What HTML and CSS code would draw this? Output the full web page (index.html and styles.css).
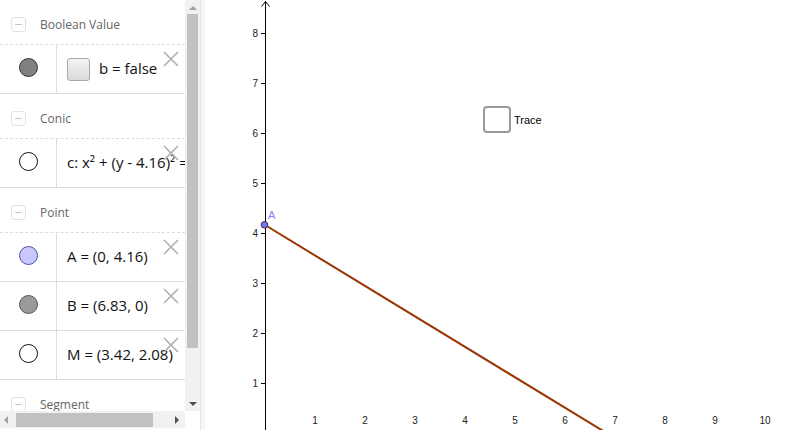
FILE: index.html
```html
<!DOCTYPE html>
<html>
<head>
<meta charset="utf-8">
<link rel="stylesheet" href="styles.css">
</head>
<body>
<div class="app">
  <div class="algebra">
    <div class="av-list">
      <div class="group-header"><span class="toggle"></span><span class="group-title">Boolean Value</span></div>
      <div class="item">
        <div class="marker"><span class="dot dot-bool"></span></div>
        <div class="content"><span class="cbox"></span><span class="expr">b = false</span></div>
        <svg class="del" width="18" height="18" viewBox="0 0 18 18"><path d="M2 2L16 16M16 2L2 16"/></svg>
      </div>
      <div class="group-header"><span class="toggle"></span><span class="group-title">Conic</span></div>
      <div class="item">
        <div class="marker"><span class="dot dot-white"></span></div>
        <div class="content"><span class="expr">c: x² + (y - 4.16)² =</span></div>
        <svg class="del" width="18" height="18" viewBox="0 0 18 18"><path d="M2 2L16 16M16 2L2 16"/></svg>
      </div>
      <div class="group-header"><span class="toggle"></span><span class="group-title">Point</span></div>
      <div class="item">
        <div class="marker"><span class="dot dot-a"></span></div>
        <div class="content"><span class="expr">A = (0, 4.16)</span></div>
        <svg class="del" width="18" height="18" viewBox="0 0 18 18"><path d="M2 2L16 16M16 2L2 16"/></svg>
      </div>
      <div class="item">
        <div class="marker"><span class="dot dot-b"></span></div>
        <div class="content"><span class="expr">B = (6.83, 0)</span></div>
        <svg class="del" width="18" height="18" viewBox="0 0 18 18"><path d="M2 2L16 16M16 2L2 16"/></svg>
      </div>
      <div class="item">
        <div class="marker"><span class="dot dot-white"></span></div>
        <div class="content"><span class="expr">M = (3.42, 2.08)</span></div>
        <svg class="del" width="18" height="18" viewBox="0 0 18 18"><path d="M2 2L16 16M16 2L2 16"/></svg>
      </div>
      <div class="group-header"><span class="toggle"></span><span class="group-title">Segment</span></div>
    </div>
    <div class="vscroll">
      <span class="arrow-up"></span>
      <div class="vtrack"><div class="vthumb"></div></div>
      <span class="arrow-down"></span>
    </div>
    <div class="hscroll">
      <span class="arrow-left"></span>
      <div class="htrack"><div class="hthumb"></div></div>
      <span class="arrow-right"></span>
    </div>
    <div class="corner"></div>
  </div>
  <div class="divider"></div>
  <div class="graphics">
    <svg class="canvas" width="595" height="430" viewBox="205 0 595 430">
      <g class="axis">
        <line x1="265.5" y1="1" x2="265.5" y2="430"/>
        <polyline points="261.5,6.5 265.5,1.5 269.5,6.5" fill="none"/>
        <line x1="261" y1="33.5" x2="265" y2="33.5"/>
        <line x1="261" y1="83.5" x2="265" y2="83.5"/>
        <line x1="261" y1="133.5" x2="265" y2="133.5"/>
        <line x1="261" y1="183.5" x2="265" y2="183.5"/>
        <line x1="261" y1="233.5" x2="265" y2="233.5"/>
        <line x1="261" y1="283.5" x2="265" y2="283.5"/>
        <line x1="261" y1="333.5" x2="265" y2="333.5"/>
        <line x1="261" y1="383.5" x2="265" y2="383.5"/>
      </g>
      <g class="ylabels">
        <text x="258" y="37">8</text>
        <text x="258" y="87">7</text>
        <text x="258" y="137">6</text>
        <text x="258" y="187">5</text>
        <text x="258" y="237">4</text>
        <text x="258" y="287">3</text>
        <text x="258" y="337">2</text>
        <text x="258" y="387">1</text>
      </g>
      <g class="xlabels">
        <text x="315" y="424">1</text>
        <text x="365" y="424">2</text>
        <text x="415" y="424">3</text>
        <text x="465" y="424">4</text>
        <text x="515" y="424">5</text>
        <text x="565" y="424">6</text>
        <text x="615" y="424">7</text>
        <text x="665" y="424">8</text>
        <text x="715" y="424">9</text>
        <text x="765" y="424">10</text>
      </g>
      <line class="segment" x1="265" y1="225" x2="606.5" y2="433"/>
      <circle class="point-a" cx="264.5" cy="224.8" r="3.3"/>
      <text class="label-a" x="268" y="219">A</text>
      <rect class="trace-box" x="484" y="107" width="26" height="25" rx="3" ry="3"/>
      <text class="trace-label" x="514" y="124">Trace</text>
    </svg>
  </div>
</div>
</body>
</html>
```

FILE: styles.css
```css
html, body {
  margin: 0;
  padding: 0;
  background: #ffffff;
}

.app {
  width: 800px;
  height: 430px;
  display: flex;
  overflow: hidden;
  font-family: "Open Sans", "DejaVu Sans", sans-serif;
}

.algebra {
  width: 200px;
  height: 430px;
  display: grid;
  grid-template-columns: 185px 15px;
  grid-template-rows: 411px 19px;
  flex: none;
}

.av-list {
  overflow: hidden;
  background: #ffffff;
}

.group-header {
  border-bottom: 1px dashed #dcdcdc;
  display: flex;
  align-items: center;
  box-sizing: content-box;
  padding-top: 4px;
  height: 40px;
}

.toggle {
  width: 13px;
  height: 13px;
  margin-left: 11px;
  border: 1px solid #e2e2e2;
  border-radius: 3px;
  position: relative;
  flex: none;
}

.toggle::after {
  content: "";
  position: absolute;
  left: 3px;
  top: 6px;
  width: 7px;
  height: 1px;
  background: #c4c4c4;
}

.group-title {
  margin-left: 14px;
  font-size: 12px;
  color: #666666;
}

.item {
  height: 48px;
  border-bottom: 1px solid #dddddd;
  display: flex;
  position: relative;
}

.marker {
  width: 57px;
  border-right: 1px solid #dddddd;
  display: flex;
  align-items: center;
  justify-content: center;
  flex: none;
  padding-bottom: 3px;
  box-sizing: border-box;
}

.dot {
  width: 17px;
  height: 17px;
  border-radius: 50%;
  border: 1px solid #222222;
  margin-left: 1px;
}

.dot-bool { background: #808080; border-color: #333333; }
.dot-white { background: #ffffff; border-color: #111111; }
.dot-a { background: #c8c8ff; border-color: #5050a0; }
.dot-b { background: #9a9a9a; border-color: #555555; }

.content {
  display: flex;
  align-items: center;
  padding-left: 10px;
  white-space: nowrap;
  padding-bottom: 2px;
}

.expr {
  font-size: 15px;
  color: #111111;
}

.cbox {
  width: 21px;
  height: 21px;
  border: 1px solid #a8a8a8;
  border-radius: 3px;
  background: linear-gradient(#f4f4f4, #dadada);
  margin-right: 9px;
  margin-top: 3px;
  flex: none;
}

.del {
  position: absolute;
  top: 5px;
  right: 5px;
}

.del path {
  stroke: #b0b0b0;
  stroke-width: 1.6;
  fill: none;
}

.vscroll {
  background: #f1f1f1;
  display: flex;
  flex-direction: column;
  align-items: center;
}

.vtrack {
  flex: 1;
  width: 11px;
  padding-top: 2px;
}

.vthumb {
  width: 11px;
  height: 334px;
  background: #c1c1c1;
}

.arrow-up {
  width: 0;
  height: 0;
  margin-top: 6px;
  border-left: 4px solid transparent;
  border-right: 4px solid transparent;
  border-bottom: 4px solid #a3a3a3;
  margin-bottom: 2px;
}

.arrow-down {
  width: 0;
  height: 0;
  margin-bottom: 5px;
  border-left: 4px solid transparent;
  border-right: 4px solid transparent;
  border-top: 4px solid #505050;
}

.hscroll {
  background: #f1f1f1;
  display: flex;
  align-items: center;
  height: 17px;
}

.htrack {
  flex: 1;
  height: 14px;
  padding-left: 8px;
}

.hthumb {
  width: 137px;
  height: 14px;
  background: #c1c1c1;
}

.arrow-left {
  width: 0;
  height: 0;
  margin-left: 4px;
  border-top: 4px solid transparent;
  border-bottom: 4px solid transparent;
  border-right: 4px solid #a3a3a3;
}

.arrow-right {
  width: 0;
  height: 0;
  margin-right: 6px;
  border-top: 4px solid transparent;
  border-bottom: 4px solid transparent;
  border-left: 4px solid #505050;
}

.corner {
  background: #ffffff;
}

.divider {
  width: 4px;
  flex: none;
  border-left: 1px solid #e6e6e6;
  background: #f7f7f7;
}

.graphics {
  flex: 1;
  height: 430px;
  background: #ffffff;
}

.canvas {
  display: block;
}

.axis line, .axis polyline {
  stroke: #000000;
  stroke-width: 1;
}

.ylabels text {
  font-family: "Liberation Sans", Arial, sans-serif;
  font-size: 10px;
  fill: #222222;
  text-anchor: end;
}

.xlabels text {
  font-family: "Liberation Sans", Arial, sans-serif;
  font-size: 10px;
  fill: #222222;
  text-anchor: middle;
}

.segment {
  stroke: #993300;
  stroke-width: 2;
}

.point-a {
  fill: #7373ff;
  stroke: #333333;
  stroke-width: 1;
}

.label-a {
  font-family: "Liberation Sans", Arial, sans-serif;
  font-size: 11px;
  fill: #7f7fff;
}

.trace-box {
  fill: #ffffff;
  stroke: #9a9a9a;
  stroke-width: 2;
}

.trace-label {
  font-family: "Liberation Sans", Arial, sans-serif;
  font-size: 11px;
  fill: #000000;
}
```
